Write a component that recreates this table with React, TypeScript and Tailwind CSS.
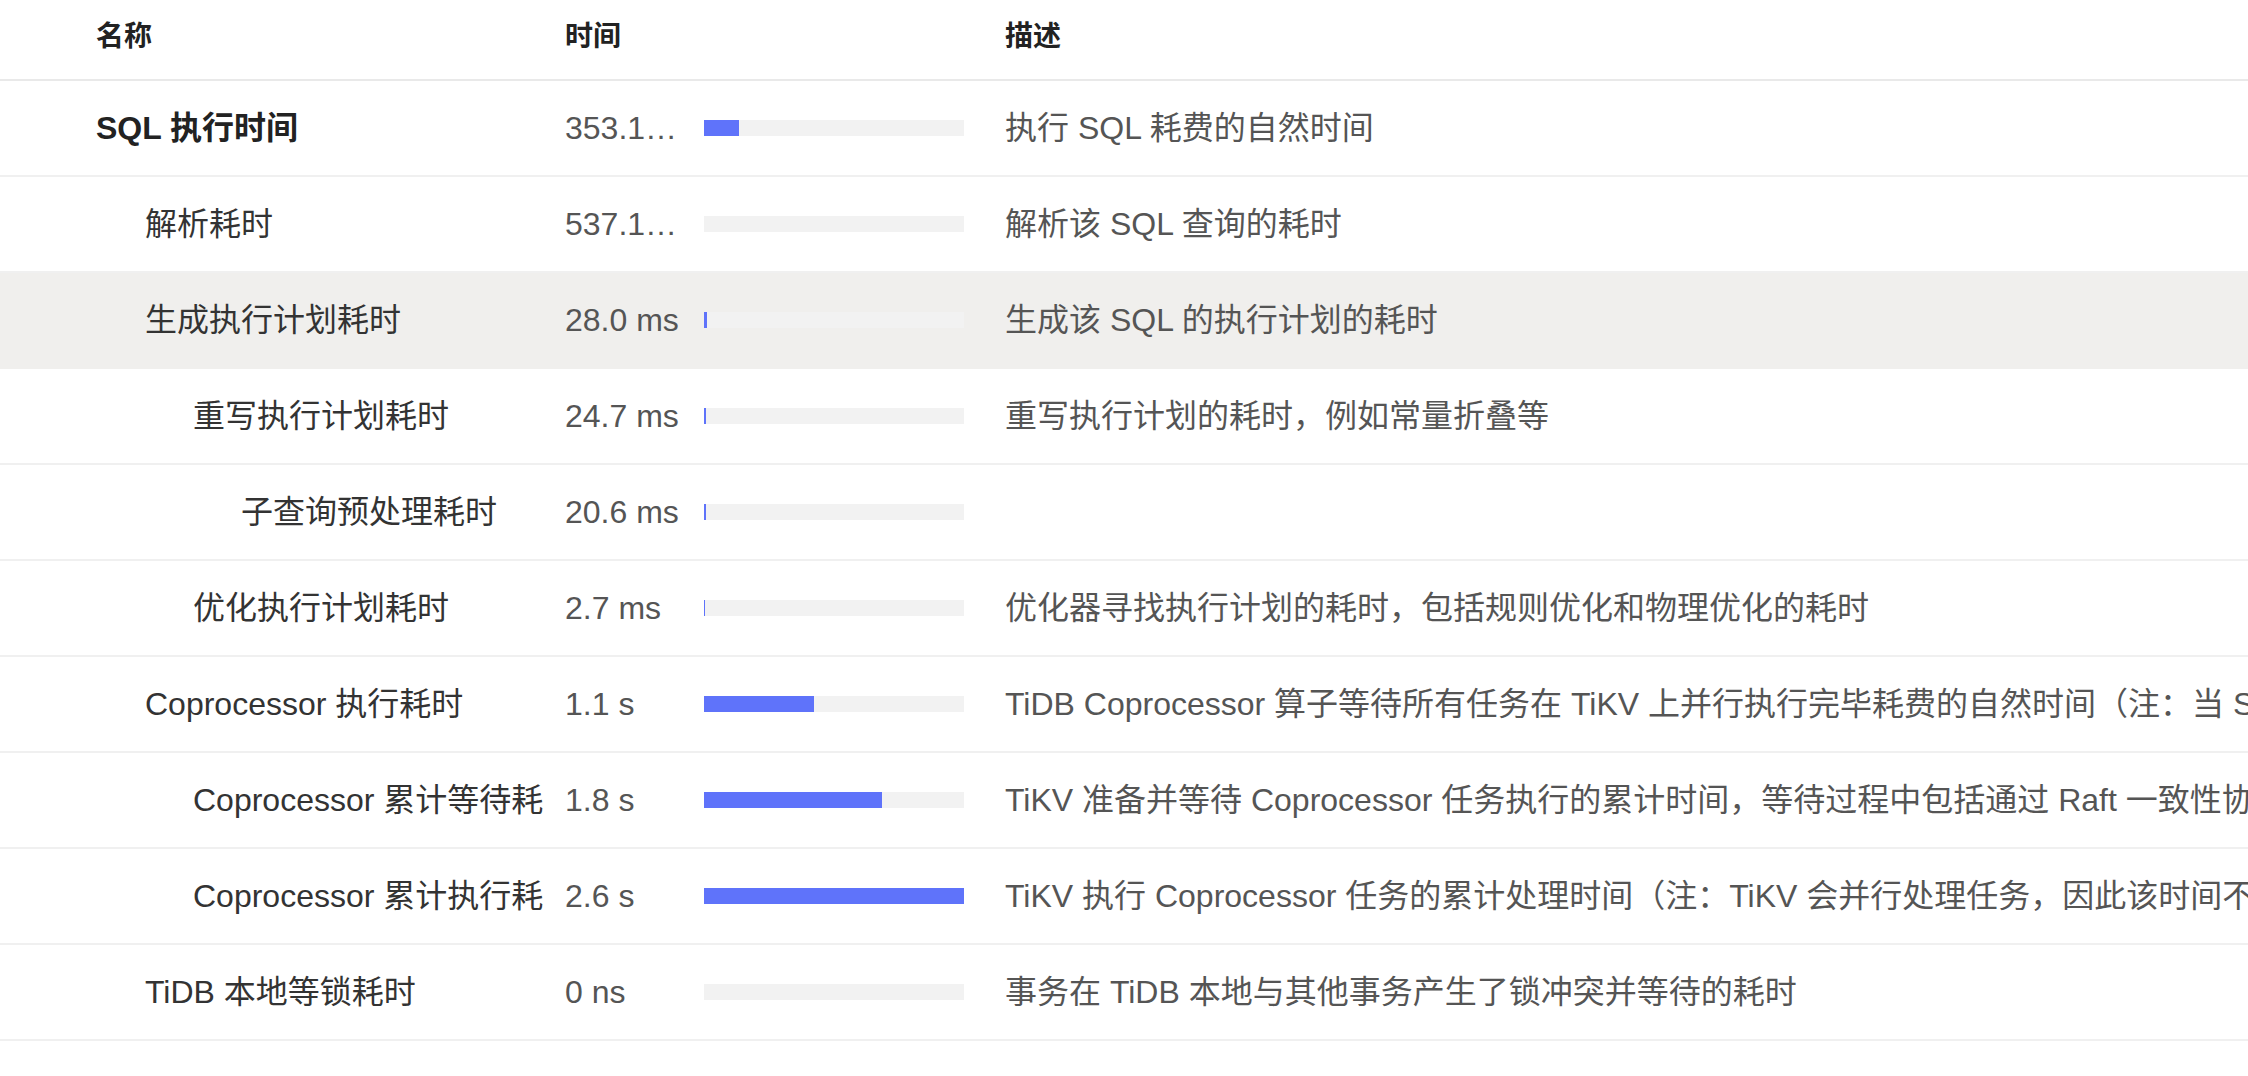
const rows = [
  { name: "SQL 执行时间", level: 0, bold: true, time: "353.1 ms", fill: 13.6, desc: "执行 SQL 耗费的自然时间" },
  { name: "解析耗时", level: 1, time: "537.1 ms", fill: 0, desc: "解析该 SQL 查询的耗时" },
  { name: "生成执行计划耗时", level: 1, time: "28.0 ms", fill: 1.08, desc: "生成该 SQL 的执行计划的耗时", active: true },
  { name: "重写执行计划耗时", level: 2, time: "24.7 ms", fill: 0.95, desc: "重写执行计划的耗时，例如常量折叠等" },
  { name: "子查询预处理耗时", level: 3, time: "20.6 ms", fill: 0.8, desc: "" },
  { name: "优化执行计划耗时", level: 2, time: "2.7 ms", fill: 0.3, desc: "优化器寻找执行计划的耗时，包括规则优化和物理优化的耗时" },
  {
    name: "Coprocessor 执行耗时",
    level: 1,
    time: "1.1 s",
    fill: 42.3,
    desc: "TiDB Coprocessor 算子等待所有任务在 TiKV 上并行执行完毕耗费的自然时间（注：当 SQL 语句中包含 LIMIT 时，可能会有部分任务没有被执行）",
  },
  {
    name: "Coprocessor 累计等待耗时",
    level: 2,
    time: "1.8 s",
    fill: 68.5,
    desc: "TiKV 准备并等待 Coprocessor 任务执行的累计时间，等待过程中包括通过 Raft 一致性协议获取 TiKV 快照的时间（注：TiKV 会并行等待任务，因此该时间不是自然流逝时间）",
  },
  {
    name: "Coprocessor 累计执行耗时",
    level: 2,
    time: "2.6 s",
    fill: 100,
    desc: "TiKV 执行 Coprocessor 任务的累计处理时间（注：TiKV 会并行处理任务，因此该时间不是自然流逝时间）",
  },
  { name: "TiDB 本地等锁耗时", level: 1, time: "0 ns", fill: 0, desc: "事务在 TiDB 本地与其他事务产生了锁冲突并等待的耗时" },
];

const indent = ["pl-[96px]", "pl-[145px]", "pl-[193px]", "pl-[241px]"];

export default function App() {
  return (
    <main className="min-h-screen w-full bg-white font-['Liberation_Sans','Noto_Sans_CJK_SC',sans-serif]">
      <header className="flex h-[81px] items-center border-b-2 border-[#e9e9e9] pb-[6px] text-[28px] font-semibold text-[#222]">
        <div className="w-[565px] shrink-0 pl-[96px]">名称</div>
        <div className="w-[440px] shrink-0">时间</div>
        <div className="flex-1">描述</div>
      </header>

      <section>
        {rows.map((row) => (
          <div
            key={row.name}
            className={
              row.active
                ? "flex h-[96px] items-center border-b-2 border-transparent bg-[#f0efed] text-[32px]"
                : "flex h-[96px] items-center border-b-2 border-[#f0f0f0] text-[32px]"
            }
          >
            <div className={`w-[565px] shrink-0 pr-[22px] ${indent[row.level]}`}>
              <div
                className={
                  row.bold
                    ? "overflow-hidden whitespace-nowrap font-semibold text-[#222]"
                    : "overflow-hidden whitespace-nowrap text-[#333]"
                }
              >
                {row.name}
              </div>
            </div>

            <div className="flex w-[440px] shrink-0 items-center">
              <span className="w-[120px] shrink-0 truncate text-[#555]">{row.time}</span>
              <div className="ml-[19px] h-[16px] w-[260px] bg-[#f2f2f2]">
                <div className="h-full bg-[#5f73fa]" style={{ width: `${row.fill}%` }} />
              </div>
            </div>

            <div className="min-w-0 flex-1 overflow-hidden whitespace-nowrap text-[#555]">{row.desc}</div>
          </div>
        ))}
      </section>
    </main>
  );
}
